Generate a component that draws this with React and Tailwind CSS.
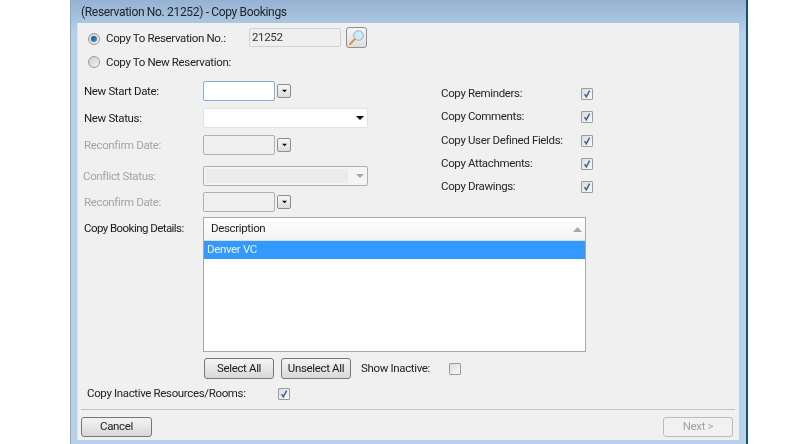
const font = { fontFamily: 'Roboto,"Noto Sans",sans-serif' };

function Check({ checked = true, className = "" }) {
  return (
    <span className={`flex h-[12px] w-[12px] shrink-0 items-center justify-center rounded-[1px] border border-[#9c9c9c] bg-gradient-to-br from-[#dcdcdc] to-[#fafafa] ${className}`}>
      {checked && (
        <svg width="10" height="10" viewBox="0 0 10 10">
          <path d="M2.6 5.2 L4.3 7.8 L7.6 1.6" fill="none" stroke="#3f5aa8" strokeWidth="1.5" />
        </svg>
      )}
    </span>
  );
}

function Radio({ checked }) {
  return (
    <span className="mt-[2px] flex h-[12px] w-[12px] shrink-0 items-center justify-center rounded-full border border-[#9a9a9a] bg-gradient-to-br from-[#cfcfcf] to-[#f4f4f4]">
      {checked && <span className="h-[6px] w-[6px] rounded-full bg-gradient-to-br from-[#174a86] to-[#3f9fe0]" />}
    </span>
  );
}

function Arrow({ color = "#000", w = 8 }) {
  return (
    <svg width={w} height="4" viewBox="0 0 8 4">
      <path d="M0 0 H8 L4 4 Z" fill={color} />
    </svg>
  );
}

function DropBtn() {
  return (
    <span className="ml-[2px] flex h-[14px] w-[14px] items-center justify-center rounded-[2px] border border-[#8e8e8e] bg-gradient-to-b from-[#f8f8f8] to-[#dcdcdc]">
      <Arrow w={5} />
    </span>
  );
}

function Row({ label, className = "", labelClass = "", children }) {
  return (
    <div className={`flex h-[20px] items-center ${className}`}>
      <span className={`w-[119px] shrink-0 pt-[1px] ${labelClass}`}>{label}</span>
      {children}
    </div>
  );
}

function DateInput({ enabled }) {
  return (
    <>
      <span
        className={
          enabled
            ? "h-[20px] w-[72px] rounded-[2px] border border-[#7fb0dc] bg-white"
            : "h-[20px] w-[72px] rounded-[2px] border border-[#b0b0b0] bg-[#f0f0f0]"
        }
      />
      <DropBtn />
    </>
  );
}

function Btn({ children, className = "", disabled }) {
  return (
    <button
      className={`flex items-center justify-center rounded-[3px] border ${
        disabled
          ? "border-[#bcbcbc] bg-[#f1f1f1] text-[#a2a2a2]"
          : "border-[#777] bg-gradient-to-b from-[#f4f4f4] to-[#d8d8d8] text-[#1c1c1c]"
      } ${className}`}
    >
      {children}
    </button>
  );
}

function RightRow({ label, className = "" }) {
  return (
    <div className={`flex h-[23px] items-center ${className}`}>
      <span className="w-[140px] shrink-0">{label}</span>
      <Check />
    </div>
  );
}

export default function App() {
  return (
    <div className="h-[444px] w-[812px] overflow-hidden bg-white text-[11.5px] tracking-[-0.35px] text-[#222] blur-[0.35px]" style={font}>
      <div className="ml-[70px] h-[444px] w-[678px] border-r-2 border-l border-r-[#1b4f6b] border-l-[#8fa6bd] bg-gradient-to-b from-[#95b2d2] from-0% to-[#b8d2ea] to-[8%]">
        <div className="flex h-[23px] items-center pl-[10px] text-[12px] tracking-[-0.33px] text-[#20242a]">
          (Reservation No. 21252) - Copy Bookings
        </div>
        <div className="ml-[6px] flex h-[417px] w-[662px] flex-col border-l border-[#d8e4f0] bg-[#f0f0f0] pl-[3px]">
          <div className="flex h-[194px] pl-[3px]">
            <div className="w-[284px] shrink-0">
              <div className="mt-[4px] flex h-[21px] items-center pl-[4px]">
                <Radio checked />
                <span className="ml-[6px] mt-[2px] w-[143px]">Copy To Reservation No.:</span>
                <span className="flex h-[19px] w-[92px] items-start rounded-[2px] border border-[#d2d2d2] bg-[#efefef] pl-[2px] text-[#333]">21252</span>
                <span className="ml-[5px] flex h-[21px] w-[21px] items-center justify-center rounded-[3px] border border-[#8f8f8f] bg-gradient-to-b from-[#f5f5f5] to-[#dedede]">
                  <svg width="17" height="17" viewBox="0 0 17 17">
                    <path d="M2 15 L7.5 9.5" stroke="#e0913c" strokeWidth="2" strokeLinecap="round" />
                    <circle cx="10.5" cy="6.5" r="4.8" fill="#cfeafa" stroke="#8fadc4" strokeWidth="1" />
                  </svg>
                </span>
              </div>
              <div className="mt-[4px] flex h-[20px] items-center pl-[4px]">
                <span className="-mt-[2px] flex"><Radio /></span>
                <span className="ml-[6px] pt-[1px]">Copy To New Reservation:</span>
              </div>
              <Row label="New Start Date:" className="mt-[9px] text-[#1a1a1a]">
                <DateInput enabled />
              </Row>
              <Row label="New Status:" className="mt-[7px] text-[#1a1a1a]">
                <span className="flex h-[20px] w-[165px] items-center justify-end rounded-[2px] border border-[#e2e2e2] bg-white pr-[3px]">
                  <Arrow />
                </span>
              </Row>
              <Row label="Reconfirm Date:" className="mt-[7px] text-[#a4a4a4]">
                <DateInput />
              </Row>
              <Row label="Conflict Status:" className="mt-[11px] text-[#a4a4a4]" labelClass="-ml-[1px] mr-[1px]">
                <span className="flex h-[20px] w-[165px] items-center rounded-[2px] border border-[#b0b0b0] bg-[#f4f4f4] pl-[2px] pr-[3px]">
                  <span className="h-[14px] w-[142px] bg-[#ebebeb]" />
                  <span className="ml-auto"><Arrow color="#a8a8a8" /></span>
                </span>
              </Row>
              <Row label="Reconfirm Date:" className="mt-[6px] text-[#a4a4a4]">
                <DateInput />
              </Row>
            </div>
            <div className="ml-[73px] pt-[59px] text-[#262626]">
              <RightRow label="Copy Reminders:" />
              <RightRow label="Copy Comments:" />
              <RightRow label="Copy User Defined Fields:" className="mt-[1px]" />
              <RightRow label="Copy Attachments:" />
              <RightRow label="Copy Drawings:" />
            </div>
          </div>
          <div className="flex pl-[3px]">
            <span className="w-[119px] shrink-0 pt-[3px] tracking-[-0.55px] text-[#1a1a1a]">Copy Booking Details:</span>
            <div className="h-[135px] w-[383px] border border-[#a8a8a8] bg-white">
              <div className="flex h-[23px] items-center justify-between border-b border-[#d5dfe8] bg-gradient-to-b from-white to-[#f2f2f2] pl-[7px] pr-[3px] text-[#1c1c1c]">
                Description
                <svg width="9" height="5" viewBox="0 0 9 5"><path d="M0 5 H9 L4.5 0 Z" fill="#a8a8a8" /></svg>
              </div>
              <div className="flex h-[18px] items-center bg-[#3399ff] pl-[3px] text-[#e8f2fb]">Denver VC</div>
            </div>
          </div>
          <div className="mt-[6px] flex h-[21px] items-center pl-[123px]">
            <Btn className="h-[21px] w-[70px] pt-[1px]">Select All</Btn>
            <Btn className="ml-[7px] h-[21px] w-[70px] pt-[1px]">Unselect All</Btn>
            <span className="ml-[10px] w-[88px]">Show Inactive:</span>
            <Check checked={false} />
          </div>
          <div className="mt-[9px] flex h-[12px] items-center pl-[6px]">
            <span className="w-[191px]">Copy Inactive Resources/Rooms:</span>
            <Check />
          </div>
          <div className="mt-[9px] h-[1px] w-[654px] bg-[#c4c4c4]" />
          <div className="mt-[7px] flex w-[652px] justify-between">
            <Btn className="h-[20px] w-[71px]">Cancel</Btn>
            <Btn disabled className="h-[20px] w-[70px]">Next &gt;</Btn>
          </div>
        </div>
      </div>
    </div>
  );
}
